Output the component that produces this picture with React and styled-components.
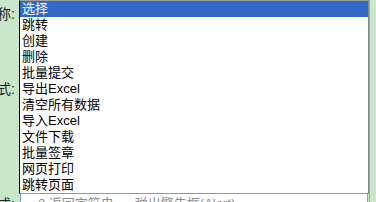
import React from "react";
import styled, { createGlobalStyle } from "styled-components";

const Global = createGlobalStyle`
  html, body { margin: 0; padding: 0; background: #c9e8c9; overflow: hidden; }
  body { font-family: "Liberation Sans", "Noto Sans CJK SC", sans-serif; font-size: 13px; }
`;

const Page = styled.div`
  position: relative;
  width: 376px;
  height: 202px;
  overflow: hidden;
  background: #c9e8c9;
`;

const Form = styled.div`
  display: flex;
  flex-direction: column;
`;

const Row = styled.div`
  display: flex;
  align-items: flex-start;
  height: ${(p) => p.$h}px;
`;

const Label = styled.div`
  width: 15px;
  flex: none;
  overflow: hidden;
  display: flex;
  justify-content: flex-end;
  white-space: nowrap;
  color: #222;
  font-size: 14px;
  line-height: 16px;
  margin-right: 5px;
  margin-top: ${(p) => p.$mt || 0}px;
`;

const Field = styled.div`
  width: 348px;
  height: ${(p) => p.$h}px;
  border: 1px solid #7f9db9;
  background: #fff;
  box-sizing: border-box;
  color: #8c8c8c;
  font-size: 13px;
  line-height: 16px;
  padding: 2px 0 0 17px;
  white-space: nowrap;
  overflow: hidden;
  display: flex;
  gap: 21px;
`;

const RightEdge = styled.div`
  position: absolute;
  top: 0;
  right: 6px;
  width: 1px;
  height: 202px;
  background: #9aa8a0;
`;

const List = styled.ul`
  position: absolute;
  top: 0;
  left: 19px;
  width: 350px;
  height: 194px;
  margin: 0;
  padding: 0;
  list-style: none;
  box-sizing: border-box;
  background: #fff;
  border: 1px solid #000;
  border-top-color: #a0a0a0;
  border-right-color: #8a8a8a;
  border-bottom-color: #7f9db9;
`;

const Item = styled.li`
  height: 16px;
  line-height: 16px;
  padding-left: 2px;
  font-size: 13px;
  color: ${(p) => (p.$selected ? "#fff" : "#000")};
  background: ${(p) => (p.$selected ? "#316ac5" : "transparent")};
  white-space: nowrap;
`;

const items = [
  "选择",
  "跳转",
  "创建",
  "删除",
  "批量提交",
  "导出Excel",
  "清空所有数据",
  "导入Excel",
  "文件下载",
  "批量签章",
  "网页打印",
  "跳转页面",
];

export default function App() {
  return (
    <Page>
      <Global />
      <Form>
        <Row $h={26}>
          <Label $mt={6}>名称:</Label>
          <Field $h={22} />
        </Row>
        <Row $h={167}>
          <Label $mt={55}>方式:</Label>
          <Field $h={160} />
        </Row>
        <Row $h={24}>
          <Label $mt={3}>方式:</Label>
          <Field $h={24}>
            <span>2.返回字符串</span>
            <span>弹出警告框(Alert)</span>
          </Field>
        </Row>
      </Form>
      <RightEdge />
      <List>
        {items.map((t, i) => (
          <Item key={t} $selected={i === 0}>
            {t}
          </Item>
        ))}
      </List>
    </Page>
  );
}
